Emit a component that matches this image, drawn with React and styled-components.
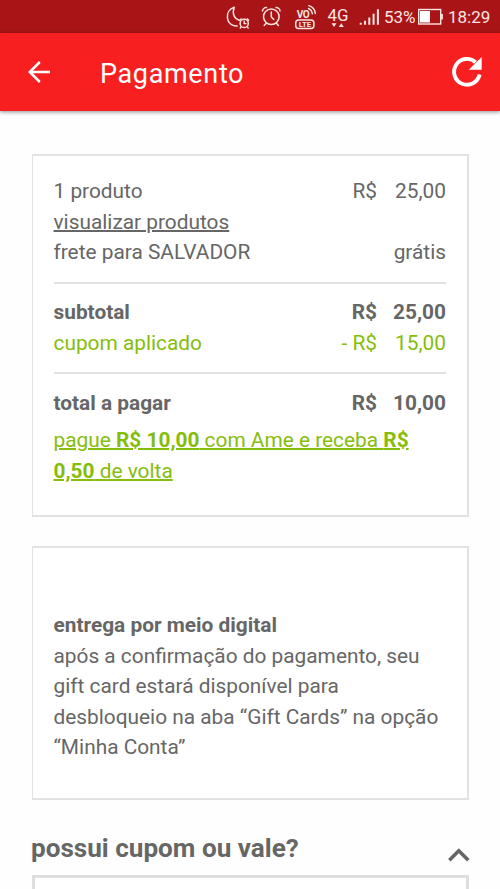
import React from 'react'
import styled, { createGlobalStyle } from 'styled-components'

const COLORS = {
    statusBar: '#a91416',
    header: '#f71f20',
    text: '#666666',
    green: '#86bd0b',
    border: '#e2e2e2',
}

const GlobalStyle = createGlobalStyle`
    * {
        box-sizing: border-box;
    }

    body {
        margin: 0;
        background: #fefefe;
        font-family: Roboto, sans-serif;
        overflow: hidden;
    }
`

const Page = styled.div`
    display: flex;
    flex-direction: column;
    height: 889px;
    overflow: hidden;
    color: ${COLORS.text};
`

const StatusBar = styled.div`
    display: flex;
    flex-shrink: 0;
    align-items: center;
    height: 33px;
    padding-left: 225px;
    background: ${COLORS.statusBar};
    color: #fbe6e4;

    svg {
        display: block;
        flex-shrink: 0;
    }
`

const StatusText = styled.span`
    font-size: 17px;
    line-height: 33px;
    width: ${props => props.$width};
    margin-left: ${props => props.$left};
    white-space: nowrap;
    padding-top: 1px;
`

const Header = styled.header`
    display: flex;
    flex-shrink: 0;
    align-items: center;
    height: 78px;
    padding: 0 16px 0 27px;
    background: ${COLORS.header};
    color: #fff;
    box-shadow: 0 1px 4px rgba(0, 0, 0, 0.45);
`

const HeaderTitle = styled.h1`
    flex: 1;
    margin: 0 0 0 49px;
    padding-top: 3px;
    font-size: 27px;
    font-weight: 400;
    letter-spacing: 0.65px;
`

const IconButton = styled.button`
    display: flex;
    padding: 0;
    border: 0;
    background: none;
    color: inherit;
`

const Content = styled.main`
    display: flex;
    flex-direction: column;
    padding: 43px 31px 0 32px;
`

const Card = styled.section`
    flex-shrink: 0;
    height: ${props => props.$height};
    margin-bottom: 29px;
    padding: ${props => props.$top} 21px 0 20.5px;
    border: 2px solid ${COLORS.border};
    border-width: 2px 2px 2px 1px;
    background: #fff;
    font-size: 20.85px;
    line-height: 30.5px;
`

const Row = styled.div`
    display: flex;
    justify-content: space-between;
    color: ${props => (props.$green ? COLORS.green : 'inherit')};
    font-weight: ${props => (props.$bold ? 700 : 400)};
`

const Price = styled.span`
    display: flex;
    gap: ${props => props.$gap || '18px'};
`

const Divider = styled.hr`
    height: 2px;
    margin: 14px 0 13.5px;
    border: 0;
    background: ${COLORS.border};
`

const TextLink = styled.a`
    display: block;
    width: fit-content;
    color: inherit;
    text-decoration: underline;
    text-decoration-thickness: 1.5px;
`

const Promo = styled(TextLink)`
    margin-top: 7px;
    color: ${COLORS.green};
`

const Paragraph = styled.p`
    margin: 0;
`

const CouponHeader = styled.div`
    display: flex;
    justify-content: space-between;
    height: 46px;
    margin-right: -1px;
`

const CouponTitle = styled.h2`
    margin: 0 0 0 -1px;
    font-size: 26.1px;
    line-height: 38px;
    font-weight: 700;
`

const CouponInput = styled.div`
    height: 60px;
    flex-shrink: 0;
    border: 3px solid #dedede;
    background: #fff;
`

function StatusIcons() {
    return (
        <svg width="155" height="33" viewBox="225 0 155 33" fill="none" stroke="currentColor" strokeWidth="1.5" strokeLinecap="round" strokeLinejoin="round">
            {/* do not disturb moon with a small clock */}
            <path d="M234.2 7.2C229.5 8.8 226.8 13 227.4 17.8C228.1 23 232 26.2 237.2 26M234.2 7.2C232 13.5 234 18.8 239.2 20.2" />
            <circle cx="244.2" cy="23.4" r="4.1" />
            <path d="M244.2 21.2V23.6H246M239.8 20.3L241 18.9M248.6 20.3L247.4 18.9M241 27L240.2 28M247.4 27L248.2 28" strokeWidth="1.4" />
            {/* alarm */}
            <circle cx="271.3" cy="16.7" r="7.8" />
            <path d="M271.3 12V17L273.8 19.5M262.5 11C262.7 9 264.5 7.4 266.5 7.6M280 11C279.8 9 278 7.4 276 7.6M266.2 23.2L264.2 25.5M276.4 23.2L278.4 25.5" />
            {/* VoLTE */}
            <text x="296.7" y="17.6" fontSize="10" fontWeight="700" textLength="13" stroke="none" fill="currentColor">VO</text>
            <path d="M308.4 8.5A6.5 6.5 0 0 1 312.3 13.8M308.8 5.6A9 9 0 0 1 315.3 13.6" strokeWidth="1.4" />
            <rect x="295.7" y="20" width="18.2" height="8.6" rx="3" />
            <text x="298.8" y="27.1" fontSize="7.8" fontWeight="700" textLength="12.3" stroke="none" fill="currentColor">LTE</text>
            {/* network */}
            <text x="327.5" y="21" fontSize="17" textLength="21" lengthAdjust="spacingAndGlyphs" stroke="none" fill="currentColor">4G</text>
            <path d="M331.5 23.2H336.5L334 27ZM338.8 27H343.8L341.3 23.2Z" stroke="none" fill="currentColor" />
            <path d="M360.7 22.7V24.8M365 20.7V24.8M369.3 17.5V24.8M373.6 13.7V24.8M377.9 9.3V24.8" strokeWidth="2" strokeLinecap="butt" />
        </svg>
    )
}

function BatteryIcon() {
    return (
        <svg width="26" height="18" viewBox="0 0 26 18" fill="none" stroke="currentColor">
            <rect x="1.7" y="1.5" width="22" height="14.5" strokeWidth="1.4" />
            <path d="M3 3H13V14.5H3Z" fill="#fff" stroke="none" />
            <path d="M25 6V11.5" strokeWidth="1.8" />
        </svg>
    )
}

function BackIcon() {
    return (
        <svg width="24" height="24" viewBox="0 0 24 24" fill="none" stroke="currentColor" strokeWidth="2.5">
            <path d="M23 12H3M12.8 2L2.8 12L12.8 22" />
        </svg>
    )
}

function RefreshIcon() {
    return (
        <svg width="34" height="34" viewBox="0 0 34 34" fill="none">
            <path d="M29.6 19.5A12.9 12.9 0 1 1 25.6 7.2" stroke="currentColor" strokeWidth="3.9" />
            <path d="M31.7 2V14.8H18.8Z" fill="currentColor" />
        </svg>
    )
}

function ChevronUp() {
    return (
        <svg width="22" height="40" viewBox="0 0 22 40" fill="none" stroke={COLORS.text} strokeWidth="3.5">
            <path d="M1.3 31.2L10.8 21.7L20.3 31.2" />
        </svg>
    )
}

function App() {
    return (
        <Page>
            <GlobalStyle />
            <StatusBar>
                <StatusIcons />
                <StatusText $left="4px" $width="33px">53%</StatusText>
                <BatteryIcon />
                <StatusText $left="5px" $width="42px">18:29</StatusText>
            </StatusBar>
            <Header>
                <IconButton aria-label="voltar"><BackIcon /></IconButton>
                <HeaderTitle>Pagamento</HeaderTitle>
                <IconButton aria-label="atualizar"><RefreshIcon /></IconButton>
            </Header>
            <Content>
                <Card $height="363px" $top="20.4px">
                    <Row>
                        <span>1 produto</span>
                        <Price><span>R$</span><span>25,00</span></Price>
                    </Row>
                    <TextLink>visualizar produtos</TextLink>
                    <Row>
                        <span>frete para SALVADOR</span>
                        <span>grátis</span>
                    </Row>
                    <Divider />
                    <Row $bold>
                        <span>subtotal</span>
                        <Price $gap="16px"><span>R$</span><span>25,00</span></Price>
                    </Row>
                    <Row $green>
                        <span>cupom aplicado</span>
                        <Price><span>- R$</span><span>15,00</span></Price>
                    </Row>
                    <Divider />
                    <Row $bold>
                        <span>total a pagar</span>
                        <Price $gap="16px"><span>R$</span><span>10,00</span></Price>
                    </Row>
                    <Promo>
                        pague <b>R$ 10,00</b> com Ame e receba <b>R$<br />0,50</b> de volta
                    </Promo>
                </Card>
                <Card $height="254px" $top="62px">
                    <Row $bold>entrega por meio digital</Row>
                    <Paragraph>
                        após a confirmação do pagamento, seu<br />
                        gift card estará disponível para<br />
                        desbloqueio na aba “Gift Cards” na opção<br />
                        “Minha Conta”
                    </Paragraph>
                </Card>
                <CouponHeader>
                    <CouponTitle>possui cupom ou vale?</CouponTitle>
                    <ChevronUp />
                </CouponHeader>
                <CouponInput />
            </Content>
        </Page>
    )
}

export default App
